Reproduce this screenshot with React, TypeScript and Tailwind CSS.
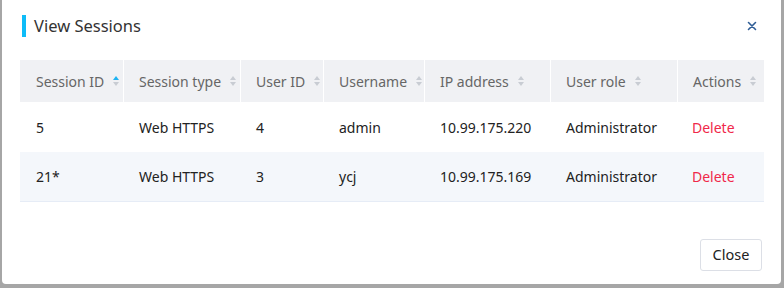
const font = { fontFamily: '"Noto Sans", "Open Sans", sans-serif' }

const columns = [
  { label: 'Session ID', width: 'w-[103px]', active: true },
  { label: 'Session type', width: 'w-[117px]' },
  { label: 'User ID', width: 'w-[83px]' },
  { label: 'Username', width: 'w-[101px]' },
  { label: 'IP address', width: 'w-[126px]' },
  { label: 'User role', width: 'w-[127px]' },
  { label: 'Actions', width: 'w-[87px]' },
]

const rows = [
  ['5', 'Web HTTPS', '4', 'admin', '10.99.175.220', 'Administrator'],
  ['21*', 'Web HTTPS', '3', 'ycj', '10.99.175.169', 'Administrator'],
]

function SortCaret({ active }: { active?: boolean }) {
  return (
    <svg width="8" height="12" viewBox="0 0 8 12" className="ml-[8px] shrink-0">
      <path d="M4 1 L7 5 L1 5 Z" fill={active ? '#1eb3f2' : '#c8ccd3'} />
      <path d="M4 11 L7 7 L1 7 Z" fill="#c8ccd3" />
    </svg>
  )
}

export default function App() {
  return (
    <div className="w-[784px] h-[288px] bg-[#a6a6a6] pl-[2px]" style={font}>
      <div className="w-[779px] h-[284px] bg-white rounded-b-[4px] flex flex-col">
        {/* header */}
        <div className="flex items-center h-[52px] pl-[20px] pr-[24px]">
          <div className="w-[4px] h-[22px] bg-[#0ebcf8]" />
          <span className="ml-[8px] text-[16.5px] text-[#333]">View Sessions</span>
          <div className="flex-1" />
          <svg width="10" height="10" viewBox="0 0 10 10">
            <path d="M1.5 1.5 L8.5 8.5 M8.5 1.5 L1.5 8.5" stroke="#2f5d96" strokeWidth="1.6" strokeLinecap="round" />
          </svg>
        </div>

        {/* table */}
        <div className="ml-[18px] mt-[8px] w-[744px]">
          <div className="flex h-[42px] bg-[#f0f1f4]">
            {columns.map((c, i) => (
              <div
                key={c.label}
                className={`${c.width} flex items-center text-[14px] text-[#666] ${i > 0 ? 'border-l border-white pl-[15px]' : 'pl-[16px]'}`}
              >
                <span>{c.label}</span>
                <SortCaret active={c.active} />
              </div>
            ))}
          </div>
          {rows.map((r, ri) => (
            <div
              key={ri}
              className={`flex h-[50px] text-[14px] text-[#222] ${ri === 1 ? 'bg-[#f4f7fb] border-b border-[#e6ecf6]' : ''}`}
            >
              {r.map((cell, ci) => (
                <div key={ci} className={`${columns[ci].width} flex items-center pl-[16px]`}>
                  {cell}
                </div>
              ))}
              <div className="w-[87px] flex items-center pl-[15px] text-[#f0284a]">Delete</div>
            </div>
          ))}
        </div>

        <div className="flex-1" />
        <div className="flex justify-end pr-[19px] pb-[13px]">
          <button className="h-[32px] w-[62px] border border-[#dcdfe6] rounded-[3px] text-[14.5px] text-[#222] bg-white">
            Close
          </button>
        </div>
      </div>
    </div>
  )
}
